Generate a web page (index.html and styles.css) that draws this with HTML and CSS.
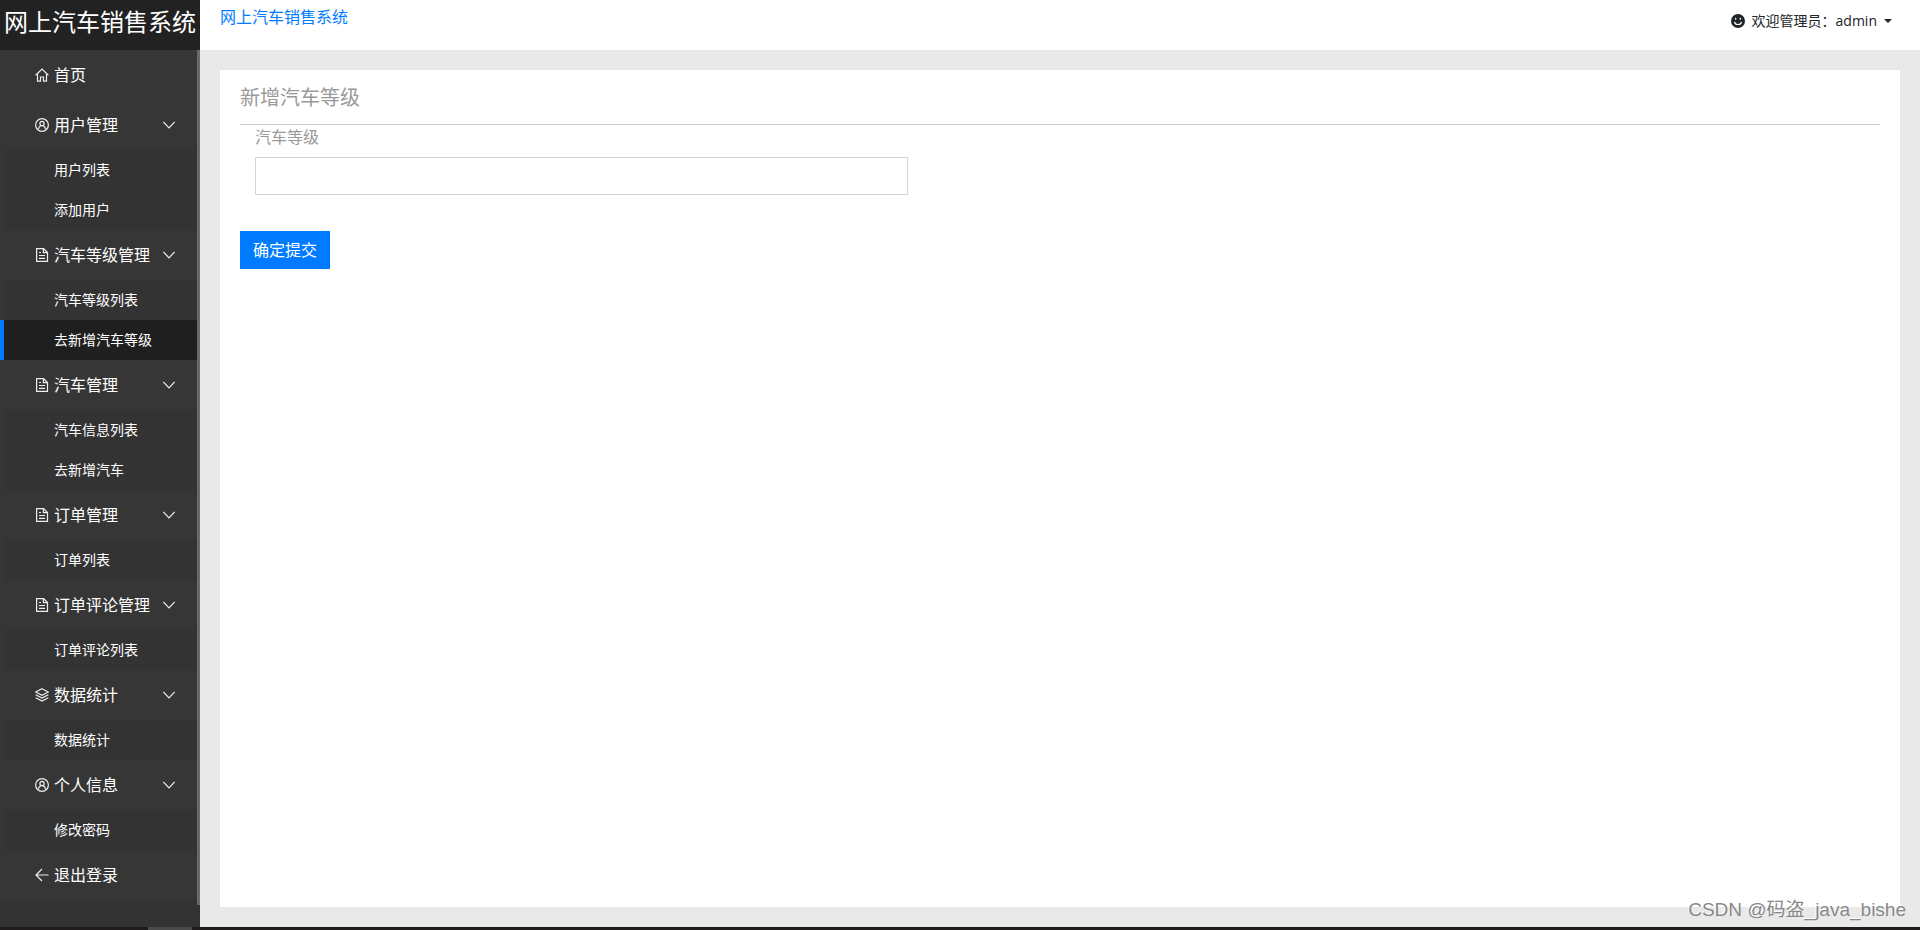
FILE: index.html
```html
<!DOCTYPE html>
<html lang="zh-CN">
<head>
  <meta charset="UTF-8">
  <meta name="viewport" content="width=device-width, initial-scale=1.0">
  <title>网上汽车销售系统</title>
  <link rel="stylesheet" href="styles.css">
</head>
<body>
  <svg class="icon-defs" aria-hidden="true">
    <symbol id="icon-home" viewBox="0 0 14 14"><path d="M.6 7.2 7 1l6.400 6.200M2.500 6.200v7h3V9h3v4.200h3v-7"/></symbol>
    <symbol id="icon-user" viewBox="0 0 14 14"><circle cx="7" cy="7" r="6.400"/><circle cx="7" cy="5.400" r="2.100"/><path d="M3.600 11.300c0-5 6.800-5 6.800 0"/></symbol>
    <symbol id="icon-file" viewBox="0 0 14 14"><path d="M1.600.6h7l3.900 3.900v8.900H1.600zM8.400.6v4.100h4M4 4.500h2M4 7.500h6M4 10.300h6"/></symbol>
    <symbol id="icon-layers" viewBox="0 0 14 14"><path d="M7 .7 13.300 4 7 7.300.7 4zM.7 6.800 7 10.100l6.300-3.300M.7 9.700 7 13l6.300-3.300"/></symbol>
    <symbol id="icon-back" viewBox="0 0 14 14"><path d="M13.500 7H1M7 1 1 7l6 6"/></symbol>
    <symbol id="icon-down" viewBox="0 0 14 14"><path d="M1.300 3.800 7 9.800l5.700-6"/></symbol>
  </svg>

  <div class="layout">
    <div class="sidebar">
      <h1 class="logo">网上汽车销售系统</h1>
      <div class="sidebar-body">
        <nav class="menu">
          <a class="menu-item" href="#"><svg class="icon"><use href="#icon-home"/></svg>首页</a>

          <a class="menu-item" href="#"><svg class="icon"><use href="#icon-user"/></svg>用户管理<svg class="icon arrow"><use href="#icon-down"/></svg></a>
          <a class="sub-item" href="#">用户列表</a>
          <a class="sub-item" href="#">添加用户</a>

          <a class="menu-item" href="#"><svg class="icon"><use href="#icon-file"/></svg>汽车等级管理<svg class="icon arrow"><use href="#icon-down"/></svg></a>
          <a class="sub-item" href="#">汽车等级列表</a>
          <a class="sub-item active" href="#">去新增汽车等级</a>

          <a class="menu-item" href="#"><svg class="icon"><use href="#icon-file"/></svg>汽车管理<svg class="icon arrow"><use href="#icon-down"/></svg></a>
          <a class="sub-item" href="#">汽车信息列表</a>
          <a class="sub-item" href="#">去新增汽车</a>

          <a class="menu-item" href="#"><svg class="icon"><use href="#icon-file"/></svg>订单管理<svg class="icon arrow"><use href="#icon-down"/></svg></a>
          <a class="sub-item" href="#">订单列表</a>

          <a class="menu-item" href="#"><svg class="icon"><use href="#icon-file"/></svg>订单评论管理<svg class="icon arrow"><use href="#icon-down"/></svg></a>
          <a class="sub-item" href="#">订单评论列表</a>

          <a class="menu-item" href="#"><svg class="icon"><use href="#icon-layers"/></svg>数据统计<svg class="icon arrow"><use href="#icon-down"/></svg></a>
          <a class="sub-item" href="#">数据统计</a>

          <a class="menu-item" href="#"><svg class="icon"><use href="#icon-user"/></svg>个人信息<svg class="icon arrow"><use href="#icon-down"/></svg></a>
          <a class="sub-item" href="#">修改密码</a>

          <a class="menu-item" href="#"><svg class="icon"><use href="#icon-back"/></svg>退出登录</a>
        </nav>
        <div class="scroll-thumb"></div>
      </div>
    </div>

    <div class="page">
      <header class="topbar">
        <a class="brand" href="#">网上汽车销售系统</a>
        <button class="user" type="button">
          <svg class="face" viewBox="0 0 14 14"><circle cx="7" cy="7" r="7" fill="#212529"/><path d="M4.700 3.800v2M9.300 3.800v2M3.500 7.800c.8 3.600 6.200 3.600 7 0" fill="none" stroke="#fff" stroke-width="1.200"/></svg>
          <span>欢迎管理员：admin</span>
          <span class="caret"></span>
        </button>
      </header>
      <main class="content">
        <form class="card">
          <h2 class="card-title">新增汽车等级</h2>
          <div class="field">
            <label for="level">汽车等级</label>
            <input id="level" type="text">
          </div>
          <button class="submit" type="button">确定提交</button>
        </form>
      </main>
    </div>
  </div>
  <footer class="bottom-bar"><span class="bottom-thumb"></span></footer>
  <div class="watermark">CSDN @码盗_java_bishe</div>
</body>
</html>
```

FILE: styles.css
```css
* {
  box-sizing: border-box;
}
body {
  display: flex;
  flex-direction: column;
  min-height: 100vh;
  margin: 0;
  font-family: "Open Sans", "Noto Sans CJK SC", sans-serif;
  font-size: 16px;
  line-height: 24px;
  color: #212529;
  background: #e9e9e9;
}
a {
  text-decoration: none;
}
.icon-defs {
  display: none;
}
.layout {
  display: flex;
  flex: 1;
}

/* sidebar */
.sidebar {
  display: flex;
  flex-direction: column;
  flex: 0 0 200px;
  background: #333;
}
.logo {
  height: 50px;
  margin: 0;
  background: #222;
  color: #fff;
  font-size: 24px;
  font-weight: 400;
  line-height: 44px;
  text-align: center;
  white-space: nowrap;
}
.sidebar-body {
  display: flex;
  flex: 1;
}
.menu {
  flex: 1;
}
.menu-item {
  display: flex;
  align-items: center;
  gap: 5px;
  height: 50px;
  padding: 0 21px 0 35px;
  background: #363636;
  color: #fff;
}
.icon {
  width: 14px;
  height: 14px;
  fill: none;
  stroke: #eee;
  stroke-width: 1.2;
}
.arrow {
  margin-left: auto;
}
.sub-item {
  display: block;
  height: 40px;
  padding-left: 50px;
  border-left: 4px solid #363636;
  background: #333;
  color: #fff;
  font-size: 14px;
  line-height: 40px;
}
.sub-item.active {
  border-left-color: #007bff;
  background: #1f1f1f;
}
.scroll-thumb {
  width: 3px;
  margin-bottom: 22px;
  background: #6b6865;
}

/* right side */
.page {
  display: flex;
  flex-direction: column;
  flex: 1;
}
.topbar {
  display: flex;
  justify-content: space-between;
  align-items: flex-start;
  height: 50px;
  padding: 5px 28px 0 20px;
  background: #fff;
}
.brand {
  color: #007bff;
}
.user {
  display: flex;
  align-items: center;
  gap: 7px;
  padding: 4px 0;
  border: 0;
  background: none;
  color: #212529;
  font-family: inherit;
  font-size: 14px;
  line-height: 24px;
}
.face {
  width: 14px;
  height: 14px;
}
.caret {
  border: 4px solid transparent;
  border-top-color: #212529;
  border-bottom: 0;
}
.content {
  display: flex;
  flex: 1;
  padding: 20px;
}
.card {
  flex: 1;
  padding: 10px 20px;
  background: #fff;
  color: #999;
}
.card-title {
  margin: 0;
  padding-bottom: 8px;
  border-bottom: 1px solid #ccc;
  font-size: 20px;
  font-weight: 400;
  line-height: 36px;
}
.field {
  width: calc(100% * 5 / 12);
  margin-bottom: 36px;
  padding: 0 15px;
}
.field label {
  display: block;
  margin-bottom: 8px;
}
.field input {
  display: block;
  width: 100%;
  height: 38px;
  padding: 6px 12px;
  border: 1px solid #ced4da;
  font: inherit;
}
.submit {
  display: block;
  padding: 6px 12px;
  border: 1px solid #007bff;
  background: #007bff;
  color: #fff;
  font: inherit;
}

.bottom-bar {
  height: 3px;
  padding-left: 148px;
  background: #1d1b1c;
}
.bottom-thumb {
  display: block;
  width: 44px;
  height: 3px;
  background: #4a4a4a;
}
.watermark {
  position: absolute;
  right: 14px;
  bottom: 8px;
  color: #888;
  font-family: "Liberation Sans", "Noto Sans CJK SC", sans-serif;
  font-size: 19px;
  text-shadow: -1px -1px 0 #fff;
}
```
